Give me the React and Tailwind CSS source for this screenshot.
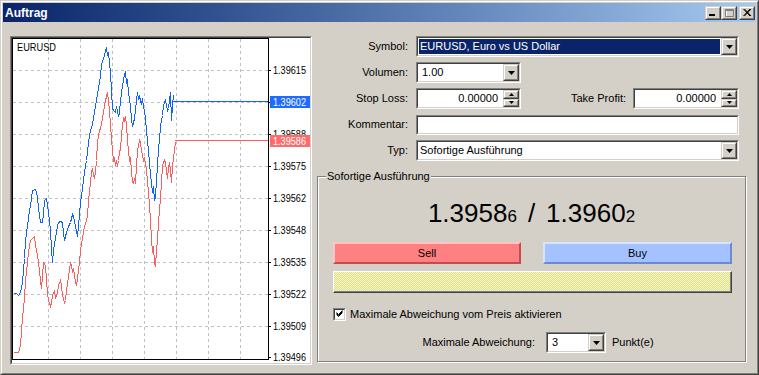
import React from 'react';

// MetaTrader "Auftrag" dialog, Windows classic look

const BLUE = [
  [13, 293], [16, 293], [18, 295], [20, 292], [22, 282], [24, 258], [25, 240], [27, 225], [29, 210], [30, 205],
  [32, 190], [35, 189], [37, 196], [38, 208], [40, 222], [42, 222], [43, 214], [44, 200], [46, 198], [47, 205],
  [48, 212], [50, 230], [51, 248], [52, 262], [53, 250], [55, 238], [57, 225], [58, 222], [60, 221], [62, 222],
  [63, 232], [64, 240], [66, 232], [68, 226], [70, 222], [72, 214], [73, 216], [75, 226], [77, 236], [78, 226],
  [80, 202], [82, 188], [84, 172], [86, 160], [88, 142], [90, 130], [92, 124], [94, 112], [96, 100], [98, 88],
  [100, 76], [101, 64], [103, 58], [104, 55], [105, 50], [106, 47], [107, 55], [108, 52], [109, 62], [110, 72],
  [111, 90], [112, 108], [113, 110], [115, 112], [116, 106], [117, 110], [118, 116], [119, 112], [120, 100], [122, 85],
  [124, 74], [125, 72], [126, 82], [127, 80], [128, 92], [130, 106], [131, 118], [132, 126], [133, 122], [134, 118],
  [136, 100], [137, 92], [138, 98], [139, 96], [140, 100], [141, 104], [142, 98], [143, 106], [144, 110], [145, 118],
  [146, 130], [148, 150], [150, 175], [151, 182], [152, 192], [153, 186], [154, 200], [155, 196], [156, 180], [157, 165],
  [158, 148], [159, 140], [160, 125], [162, 115], [163, 105], [164, 102], [165, 100], [166, 104], [167, 110], [168, 108],
  [169, 100], [170, 92], [171, 120], [172, 105], [173, 95],
];

const RED = [
  [13, 352], [18, 352], [20, 345], [21, 330], [22, 318], [24, 298], [25, 280], [27, 262], [28, 252], [30, 240],
  [32, 238], [34, 236], [35, 245], [37, 255], [38, 262], [40, 280], [41, 288], [42, 275], [43, 262], [45, 265],
  [46, 280], [47, 292], [48, 300], [50, 306], [51, 302], [52, 295], [54, 290], [55, 298], [57, 292], [58, 285],
  [60, 280], [61, 285], [62, 295], [64, 302], [65, 300], [66, 290], [68, 276], [70, 262], [71, 265], [72, 272],
  [73, 268], [75, 282], [76, 285], [77, 278], [78, 270], [79, 262], [80, 250], [82, 238], [84, 226], [86, 220],
  [87, 215], [88, 200], [90, 182], [91, 172], [92, 168], [93, 175], [94, 178], [95, 172], [96, 160], [97, 142],
  [99, 130], [100, 128], [102, 118], [103, 112], [105, 100], [106, 96], [107, 92], [108, 100], [109, 110], [110, 125],
  [111, 138], [112, 150], [113, 160], [114, 158], [115, 165], [116, 160], [117, 166], [118, 160], [119, 152], [120, 148],
  [121, 135], [122, 125], [123, 118], [124, 120], [125, 116], [126, 125], [127, 140], [128, 150], [129, 160], [130, 158],
  [131, 170], [132, 182], [133, 183], [134, 178], [135, 183], [136, 165], [137, 150], [138, 145], [139, 140], [140, 142],
  [141, 150], [142, 155], [143, 160], [144, 158], [145, 163], [146, 170], [147, 180], [148, 192], [149, 205], [150, 220],
  [151, 238], [152, 252], [153, 246], [154, 262], [155, 266], [156, 250], [157, 240], [158, 222], [159, 210], [160, 198],
  [161, 182], [162, 165], [163, 162], [164, 160], [165, 162], [166, 170], [167, 178], [168, 168], [169, 162], [170, 170],
  [171, 182], [172, 165], [173, 158], [174, 150], [175, 142],
];

const LEVELS = [
  [70, '1.39615'], [102, '1.39602'], [134, '1.39588'], [166, '1.39575'], [198, '1.39562'],
  [230, '1.39548'], [262, '1.39535'], [294, '1.39522'], [326, '1.39509'], [357, '1.39496'],
];

const GRID_X = [48, 80, 112, 144, 176, 208, 240];

const pts = (arr) => arr.map(([x, y]) => `${x + 0.5},${y + 0.5}`).join(' ');

const Sunken = ({ className = '', inner = 'bg-white', children }) => (
  <div className={`border border-t-[#808080] border-l-[#808080] border-r-white border-b-white ${className}`}>
    <div className={`w-full h-full border border-t-[#404040] border-l-[#404040] border-r-[#d4d0c8] border-b-[#d4d0c8] flex items-stretch ${inner}`}>
      {children}
    </div>
  </div>
);

const Raised = ({ className = '', children }) => (
  <div className={`border border-t-[#d4d0c8] border-l-[#d4d0c8] border-r-[#404040] border-b-[#404040] bg-[#d4d0c8] ${className}`}>
    <div className="w-full h-full border border-t-white border-l-white border-r-[#808080] border-b-[#808080] flex items-center justify-center">
      {children}
    </div>
  </div>
);

const Arrow = () => (
  <svg width="7" height="4" viewBox="0 0 7 4">
    <polygon points="0,0 7,0 3.5,4" fill="#000" />
  </svg>
);

const DropBtn = () => (
  <Raised className="w-[16px] h-full shrink-0">
    <Arrow />
  </Raised>
);

const Spinner = () => (
  <div className="w-[16px] h-full flex flex-col shrink-0">
    <Raised className="flex-1">
      <svg width="5" height="3" viewBox="0 0 5 3"><polygon points="2.5,0 5,3 0,3" fill="#000" /></svg>
    </Raised>
    <Raised className="flex-1">
      <svg width="5" height="3" viewBox="0 0 5 3"><polygon points="0,0 5,0 2.5,3" fill="#000" /></svg>
    </Raised>
  </div>
);

const Row = ({ label, children }) => (
  <div className="flex items-center h-[21px]">
    <div className="w-[96px] text-right whitespace-nowrap">{label}</div>
    <div className="ml-[8px] flex items-center h-full">{children}</div>
  </div>
);

const TitleBar = () => (
  <div className="h-[19px] flex items-center bg-linear-to-r from-[#0a246a] to-[#a6caf0] pl-[2px] pr-[1px]">
    <span className="text-white font-bold text-[12px] leading-none">Auftrag</span>
    <div className="ml-auto flex items-center">
      <Raised className="w-[16px] h-[14px]">
        <svg width="10" height="9" viewBox="0 0 10 9" className="block">
          <rect x="1" y="6" width="6" height="2" fill="#000" />
        </svg>
      </Raised>
      <Raised className="w-[16px] h-[14px]">
        <svg width="10" height="9" viewBox="0 0 10 9" className="block">
          <path d="M2.5 2.5h8v7h-8z" fill="none" stroke="#fff" />
          <path d="M1.5 1.5h8v7h-8z M1 2.5h9" fill="none" stroke="#808080" />
        </svg>
      </Raised>
      <Raised className="w-[16px] h-[14px] ml-[2px]">
        <svg width="10" height="9" viewBox="0 0 10 9" className="block">
          <path d="M1.5 1l6.5 7M2.5 1l6.5 7M8 1l-6.5 7M9 1l-6.5 7" stroke="#000" strokeWidth="1" />
        </svg>
      </Raised>
    </div>
  </div>
);

const Label = ({ y, v, fill = '#000' }) => (
  <text x="273" y={y} fontSize="10.5" dominantBaseline="central" fill={fill} textLength="33" lengthAdjust="spacingAndGlyphs">
    {v}
  </text>
);

const Chart = () => (
  <svg width="298" height="325" viewBox="12 38 298 325" className="block">
    <g shapeRendering="crispEdges">
      {GRID_X.map((x) => (
        <line key={x} x1={x + 0.5} y1="39" x2={x + 0.5} y2="359" stroke="#c0c0c0" strokeDasharray="3 3" />
      ))}
      {LEVELS.slice(0, 9).map(([y]) => (
        <line key={y} x1="13" y1={y + 0.5} x2="268" y2={y + 0.5} stroke="#c0c0c0" strokeDasharray="3 3" />
      ))}
      <rect x="12.5" y="38.5" width="256" height="321" fill="none" stroke="#000" />
      {LEVELS.map(([y]) => (
        <line key={`t${y}`} x1="268" y1={Math.min(y, 358) + 0.5} x2="271" y2={Math.min(y, 358) + 0.5} stroke="#000" />
      ))}
      <polyline points={pts(RED)} fill="none" stroke="#ff5c5c" />
      <polyline points={pts(BLUE)} fill="none" stroke="#0f62fe" />
      <line x1="175" y1="140.5" x2="268" y2="140.5" stroke="#ff5c5c" />
      <line x1="173" y1="101.5" x2="268" y2="101.5" stroke="#0f62fe" />
    </g>
    <text x="17" y="47" fontSize="11" dominantBaseline="central" fill="#000" textLength="39" lengthAdjust="spacingAndGlyphs">EURUSD</text>
    {LEVELS.map(([y, v]) => (
      <Label key={v} y={y} v={v} />
    ))}
    <rect x="270" y="96" width="40" height="12" fill="#1e6bff" shapeRendering="crispEdges" />
    <Label y={102} v="1.39602" fill="#fff" />
    <rect x="270" y="135" width="40" height="12" fill="#ff6b6b" shapeRendering="crispEdges" />
    <Label y={141} v="1.39586" fill="#fff" />
  </svg>
);

export default function App() {
  return (
    <div className="w-[759px] h-[375px] overflow-hidden bg-[#d4d0c8] text-black text-[11px] leading-[13px] font-['Liberation_Sans',Arial,sans-serif] border border-t-[#d4d0c8] border-l-[#d4d0c8] border-r-[#404040] border-b-[#404040]">
      <div className="h-full border border-t-white border-l-white border-r-[#808080] border-b-[#808080] p-px flex flex-col">
        <TitleBar />

        <div className="flex-1 flex pl-[7px] pt-[14px]">
          {/* chart */}
          <Sunken className="w-[302px] h-[329px] shrink-0">
            <Chart />
          </Sunken>

          {/* order form */}
          <div className="flex flex-col w-[434px]">
            <div className="flex flex-col gap-[5px]">
              <Row label="Symbol:">
                <Sunken className="w-[323px] h-[21px]">
                  <div className="flex-1 p-px">
                    <div className="h-full bg-[#0a246a] text-white pl-px flex items-center whitespace-nowrap">
                      EURUSD, Euro vs US Dollar
                    </div>
                  </div>
                  <DropBtn />
                </Sunken>
              </Row>

              <Row label="Volumen:">
                <Sunken className="w-[105px] h-[21px]">
                  <div className="flex-1 pl-[4px] flex items-center">1.00</div>
                  <DropBtn />
                </Sunken>
              </Row>

              <div className="flex items-center h-[21px]">
                <div className="w-[96px] text-right">Stop Loss:</div>
                <Sunken className="ml-[8px] w-[105px] h-[21px]">
                  <div className="flex-1 pr-[5px] flex items-center justify-end">0.00000</div>
                  <Spinner />
                </Sunken>
                <div className="w-[105px] text-right">Take Profit:</div>
                <Sunken className="ml-[7px] w-[106px] h-[21px]">
                  <div className="flex-1 pr-[5px] flex items-center justify-end">0.00000</div>
                  <Spinner />
                </Sunken>
              </div>

              <Row label="Kommentar:">
                <Sunken className="w-[323px] h-[20px]" />
              </Row>

              <Row label="Typ:">
                <Sunken className="w-[323px] h-[21px]">
                  <div className="flex-1 pl-[2px] flex items-center whitespace-nowrap">Sofortige Ausführung</div>
                  <DropBtn />
                </Sunken>
              </Row>
            </div>

            {/* group box */}
            <div className="relative ml-[5px] mt-[15px] w-[429px] h-[186px] border border-[#808080] shadow-[inset_1px_1px_0_#fff,1px_1px_0_#fff] flex flex-col">
              <span className="absolute left-[8px] -top-[7px] px-px bg-[#d4d0c8] whitespace-nowrap">Sofortige Ausführung</span>

              <div className="mt-[23px] h-[26px] text-[26px] leading-none text-center whitespace-nowrap">
                <span>1.3958</span><span className="text-[17px]">6</span>
                <span className="px-[11px]">/</span>
                <span>1.3960</span><span className="text-[17px]">2</span>
              </div>

              <div className="mt-[16px] pl-[15px] pr-[13px] flex justify-between">
                <div className="w-[188px] h-[22px] border-2 border-t-[#ffc4c4] border-l-[#ffc4c4] border-r-[#c44c4c] border-b-[#c44c4c] bg-[#ff8080] flex items-center justify-center">
                  Sell
                </div>
                <div className="w-[189px] h-[22px] border-2 border-t-[#d6e4ff] border-l-[#d6e4ff] border-r-[#6a8ad2] border-b-[#6a8ad2] bg-[#a4c2ff] flex items-center justify-center">
                  Buy
                </div>
              </div>

              <div className="mt-[7px] ml-[15px] mr-[13px] h-[22px] border border-t-white border-l-white border-r-[#404040] border-b-[#404040] shadow-[inset_-1px_-1px_0_#808080] bg-[repeating-conic-gradient(#dede84_0%_25%,#f8f8cc_0%_50%)] bg-[length:2px_2px]" />

              <div className="mt-[15px] pl-[15px] flex items-center h-[13px]">
                <Sunken className="w-[13px] h-[13px]" inner="bg-white items-center justify-center">
                  <svg width="7" height="7" viewBox="0 0 7 7" className="block">
                    <path d="M0.5 2.5l2 2 4-4M0.5 3.5l2 2 4-4M0.5 4.5l2 2 4-4" fill="none" stroke="#000" />
                  </svg>
                </Sunken>
                <span className="ml-[4px] whitespace-nowrap">Maximale Abweichung vom Preis aktivieren</span>
              </div>

              <div className="mt-[11px] flex items-center h-[21px]">
                <div className="w-[217px] text-right whitespace-nowrap">Maximale Abweichung:</div>
                <Sunken className="ml-[11px] w-[60px] h-[21px]">
                  <div className="flex-1 pl-[4px] flex items-center">3</div>
                  <DropBtn />
                </Sunken>
                <span className="ml-[6px]">Punkt(e)</span>
              </div>
            </div>
          </div>
        </div>
      </div>
    </div>
  );
}
